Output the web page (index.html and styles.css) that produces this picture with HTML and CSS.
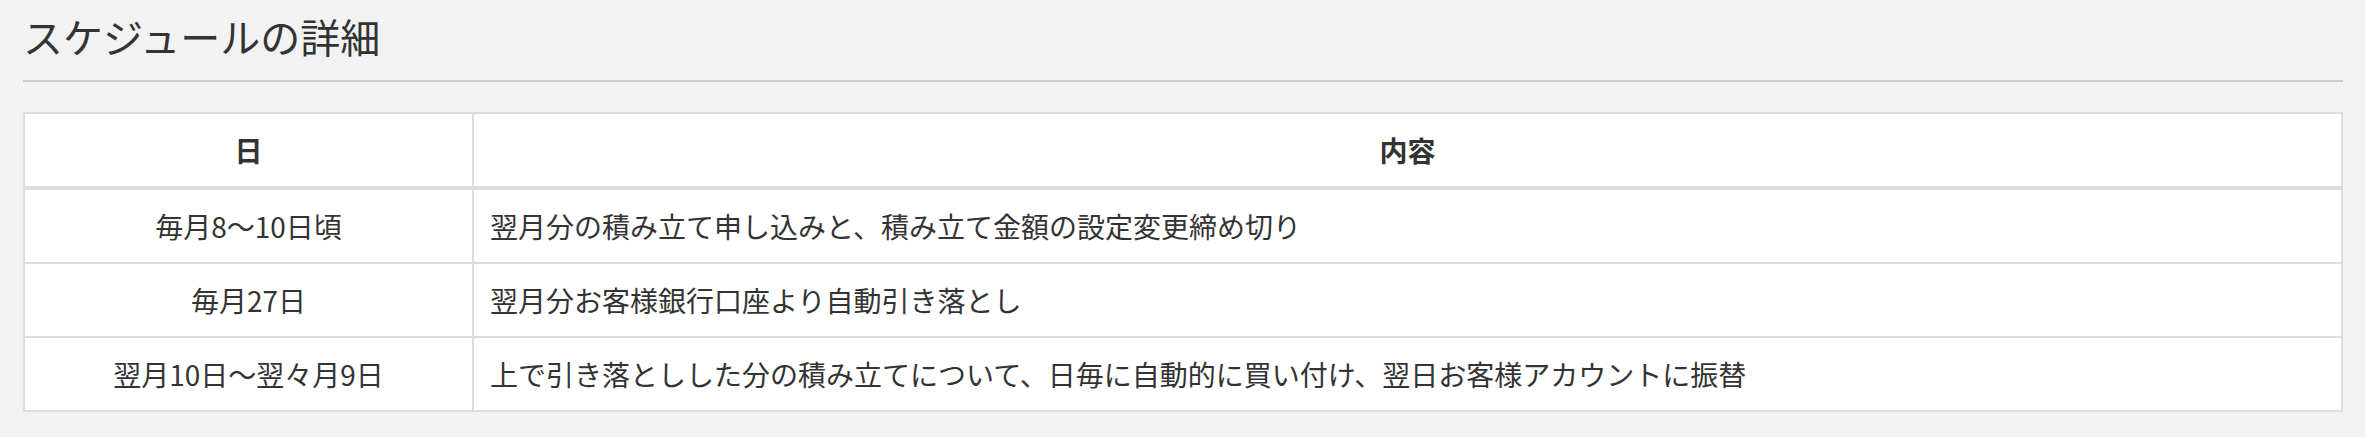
FILE: index.html
```html
<!DOCTYPE html>
<html lang="ja">
<head>
<meta charset="utf-8">
<title>スケジュールの詳細</title>
<link rel="stylesheet" href="styles.css">
</head>
<body>
<main class="page">
  <h2 class="section-title">スケジュールの詳細</h2>
  <table class="schedule">
    <colgroup>
      <col class="col-day">
      <col class="col-content">
    </colgroup>
    <thead>
      <tr>
        <th>日</th>
        <th>内容</th>
      </tr>
    </thead>
    <tbody>
      <tr>
        <td class="day">毎月8～10日頃</td>
        <td>翌月分の積み立て申し込みと、積み立て金額の設定変更締め切り</td>
      </tr>
      <tr>
        <td class="day">毎月27日</td>
        <td>翌月分お客様銀行口座より自動引き落とし</td>
      </tr>
      <tr>
        <td class="day">翌月10日～翌々月9日</td>
        <td>上で引き落としした分の積み立てについて、日毎に自動的に買い付け、翌日お客様アカウントに振替</td>
      </tr>
    </tbody>
  </table>
</main>
</body>
</html>
```

FILE: styles.css
```css
html, body {
  margin: 0;
  padding: 0;
  background: #f2f2f2;
}

body {
  font-family: "Noto Sans CJK JP", "Noto Sans", sans-serif;
  color: #333333;
  font-size: 28px;
  line-height: 40px;
}

.page {
  padding: 14px 22px 26px 23px;
}

.section-title {
  margin: 0 0 30px 0;
  padding: 0 0 22px 0;
  font-size: 40px;
  line-height: 44px;
  font-weight: normal;
  border-bottom: 2px solid #cccccc;
}

.schedule {
  width: 100%;
  border-collapse: collapse;
  table-layout: fixed;
  background: #ffffff;
  border: 2px solid #dddddd;
}

.col-day {
  width: 449px;
}

.schedule th,
.schedule td {
  border: 2px solid #dddddd;
  padding: 16px;
  font-size: 28px;
  line-height: 40px;
  vertical-align: middle;
}

.schedule th {
  text-align: center;
  font-weight: bold;
  border-bottom-width: 4px;
}

.schedule td {
  text-align: left;
}

.schedule td.day {
  text-align: center;
}
```
